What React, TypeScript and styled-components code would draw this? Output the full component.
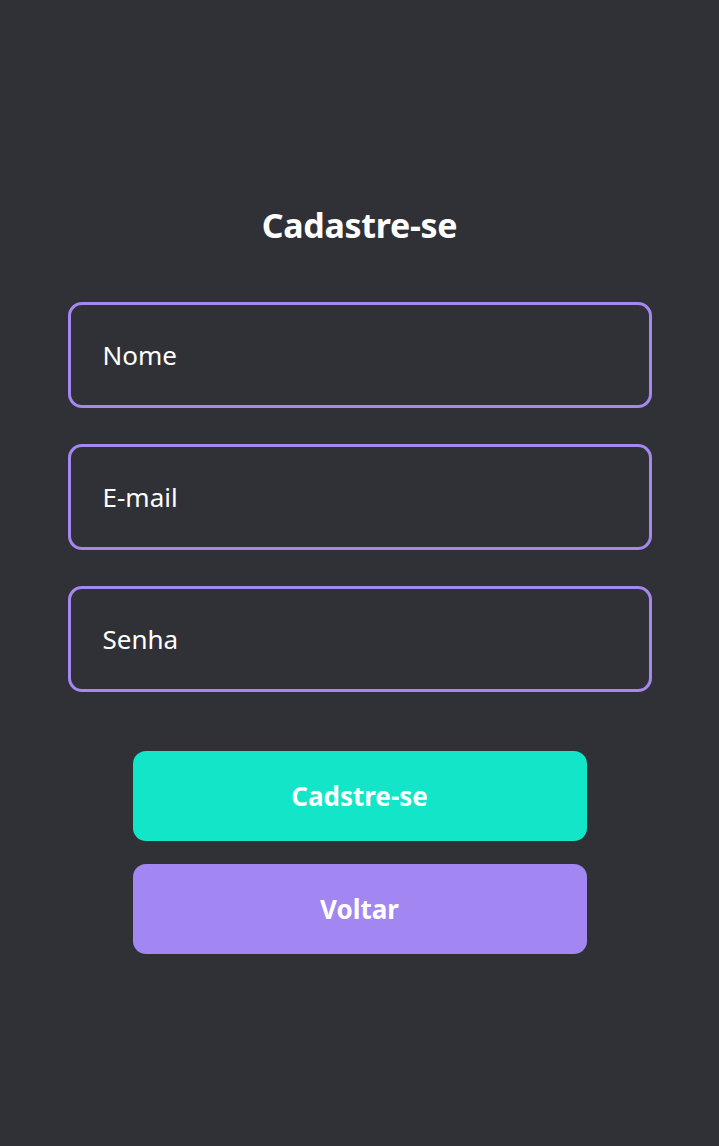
import React from "react";
import styled, { createGlobalStyle } from "styled-components";

const Global = createGlobalStyle`
  html, body { margin: 0; padding: 0; background: #303136; }
  body { font-family: "Noto Sans", "Open Sans", sans-serif; }
  * { box-sizing: border-box; }
`;

const Page = styled.main`
  min-height: 1146px;
  background: #303136;
  display: flex;
  flex-direction: column;
  align-items: center;
  padding-top: 200px;
`;

const Title = styled.h1`
  margin: 0;
  height: 50px;
  line-height: 50px;
  font-size: 34px;
  font-weight: 700;
  color: #ffffff;
  letter-spacing: -0.3px;
`;

const Form = styled.form`
  width: 584px;
  margin-top: 52px;
  display: flex;
  flex-direction: column;
  gap: 36px;
`;

const Input = styled.input`
  height: 106px;
  width: 100%;
  border: 3px solid #a588ef;
  border-radius: 14px;
  background: transparent;
  padding: 0 32px;
  font-family: inherit;
  font-size: 26px;
  color: #ffffff;
  outline: none;
  &::placeholder { color: #ffffff; opacity: 1; }
`;

const Actions = styled.div`
  margin-top: 59px;
  width: 454px;
  display: flex;
  flex-direction: column;
  gap: 23px;
`;

const Button = styled.button<{ $variant: "primary" | "secondary" }>`
  height: 90px;
  width: 100%;
  border: none;
  border-radius: 13px;
  background: ${(p) => (p.$variant === "primary" ? "#12e5c8" : "#a287f2")};
  color: #ffffff;
  font-family: inherit;
  font-size: 26px;
  font-weight: 700;
  cursor: pointer;
`;

export default function App() {
  return (
    <>
      <Global />
      <Page>
        <Title>Cadastre-se</Title>
        <Form onSubmit={(e) => e.preventDefault()}>
          <Input placeholder="Nome" />
          <Input placeholder="E-mail" />
          <Input placeholder="Senha" type="password" />
        </Form>
        <Actions>
          <Button $variant="primary">Cadstre-se</Button>
          <Button $variant="secondary">Voltar</Button>
        </Actions>
      </Page>
    </>
  );
}
